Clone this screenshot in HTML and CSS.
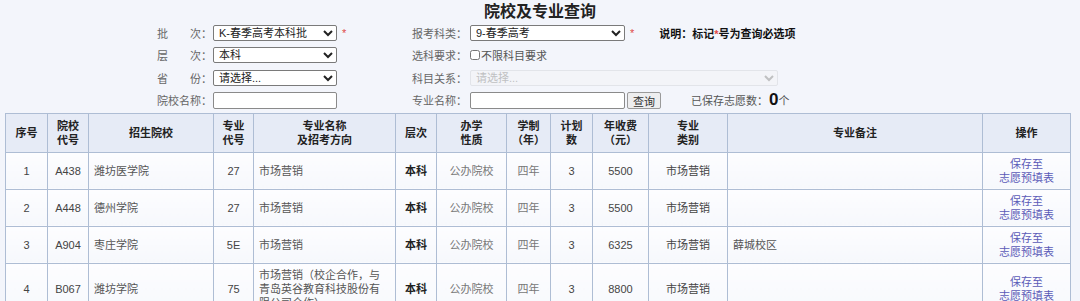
FILE: index.html
```html
<!DOCTYPE html>
<html lang="zh-CN">
<head>
    <meta charset="UTF-8">
    <title>院校及专业查询</title>
    <link rel="stylesheet" href="styles.css">
</head>
<body>
    <h1 class="title">院校及专业查询</h1>

    <form class="query" onsubmit="return false;">
        <label class="lbl">批　　次：</label>
        <div class="fld">
            <select class="sel"><option>K-春季高考本科批</option></select><span class="req">*</span>
        </div>
        <label class="lbl">报考科类：</label>
        <div class="fld">
            <select class="sel sel-mid"><option>9-春季高考</option></select><span class="req">*</span>
            <span class="note">说明：标记<span class="req-in">*</span>号为查询必选项</span>
        </div>

        <label class="lbl">层　　次：</label>
        <div class="fld">
            <select class="sel"><option>本科</option></select>
        </div>
        <label class="lbl">选科要求：</label>
        <div class="fld">
            <label class="chk"><input type="checkbox">不限科目要求</label>
        </div>

        <label class="lbl">省　　份：</label>
        <div class="fld">
            <select class="sel"><option>请选择...</option></select>
        </div>
        <label class="lbl">科目关系：</label>
        <div class="fld">
            <select class="sel sel-wide" disabled><option>请选择...</option></select>
        </div>

        <label class="lbl">院校名称：</label>
        <div class="fld">
            <input type="text" class="txt">
        </div>
        <label class="lbl">专业名称：</label>
        <div class="fld">
            <input type="text" class="txt txt-mid">
            <button class="btn">查询</button>
            <span class="saved">已保存志愿数：<b>0</b>个</span>
        </div>
    </form>

    <table class="list">
        <colgroup>
            <col style="width:42px">
            <col style="width:41px">
            <col style="width:125px">
            <col style="width:40px">
            <col style="width:142px">
            <col style="width:41px">
            <col style="width:70px">
            <col style="width:44px">
            <col style="width:42px">
            <col style="width:56px">
            <col style="width:79px">
            <col style="width:255px">
            <col style="width:88px">
        </colgroup>
        <thead>
            <tr>
                <th>序号</th>
                <th>院校<br>代号</th>
                <th>招生院校</th>
                <th>专业<br>代号</th>
                <th>专业名称<br>及招考方向</th>
                <th>层次</th>
                <th>办学<br>性质</th>
                <th>学制<br>（年）</th>
                <th>计划<br>数</th>
                <th>年收费<br>（元）</th>
                <th>专业<br>类别</th>
                <th>专业备注</th>
                <th>操作</th>
            </tr>
        </thead>
        <tbody>
            <tr>
                <td>1</td>
                <td>A438</td>
                <td class="left">潍坊医学院</td>
                <td>27</td>
                <td class="left">市场营销</td>
                <td class="lv">本科</td>
                <td class="soft">公办院校</td>
                <td class="soft">四年</td>
                <td>3</td>
                <td>5500</td>
                <td>市场营销</td>
                <td class="left"></td>
                <td><a href="#" class="save">保存至<br>志愿预填表</a></td>
            </tr>
            <tr>
                <td>2</td>
                <td>A448</td>
                <td class="left">德州学院</td>
                <td>27</td>
                <td class="left">市场营销</td>
                <td class="lv">本科</td>
                <td class="soft">公办院校</td>
                <td class="soft">四年</td>
                <td>3</td>
                <td>5500</td>
                <td>市场营销</td>
                <td class="left"></td>
                <td><a href="#" class="save">保存至<br>志愿预填表</a></td>
            </tr>
            <tr>
                <td>3</td>
                <td>A904</td>
                <td class="left">枣庄学院</td>
                <td>5E</td>
                <td class="left">市场营销</td>
                <td class="lv">本科</td>
                <td class="soft">公办院校</td>
                <td class="soft">四年</td>
                <td>3</td>
                <td>6325</td>
                <td>市场营销</td>
                <td class="left">薛城校区</td>
                <td><a href="#" class="save">保存至<br>志愿预填表</a></td>
            </tr>
            <tr>
                <td>4</td>
                <td>B067</td>
                <td class="left">潍坊学院</td>
                <td>75</td>
                <td class="left">市场营销（校企合作，与青岛英谷教育科技股份有限公司合作）</td>
                <td class="lv">本科</td>
                <td class="soft">公办院校</td>
                <td class="soft">四年</td>
                <td>3</td>
                <td>8800</td>
                <td>市场营销</td>
                <td class="left"></td>
                <td><a href="#" class="save">保存至<br>志愿预填表</a></td>
            </tr>
        </tbody>
    </table>
</body>
</html>
```

FILE: styles.css
```css
body {
    margin: 0;
    background-color: #f3f5fb;
    font-family: "Liberation Sans", "Noto Sans CJK SC", sans-serif;
    font-size: 11px;
    color: #333;
}
.title {
    margin: 0;
    height: 24px;
    line-height: 24px;
    text-align: center;
    font-size: 16px;
    font-weight: bold;
    color: #222;
}

/* query form: two label/field pairs per row */
.query {
    display: grid;
    grid-template-columns: 56px 199px 58px 1fr;
    grid-auto-rows: 17px;
    row-gap: 5.5px;
    padding-left: 157px;
    margin: 0 0 4px 0;
}
.lbl {
    display: flex;
    align-items: center;
    color: #666;
    white-space: nowrap;
}
.fld {
    display: flex;
    align-items: center;
    white-space: nowrap;
}
.sel {
    width: 124px;
    height: 16px;
    font-family: inherit;
    font-size: 11px;
    color: #222;
    background-color: #fff;
    border: 1px solid #7a7a7a;
    border-radius: 2px;
    padding: 0 1px;
}
.sel-mid { width: 155px; }
.sel-wide {
    width: 308px;
}
.sel:disabled {
    color: #aaa;
    background-color: #f3f4f7;
    border-color: #dcdde2;
}
.req {
    color: #e04848;
    margin-left: 5px;
    font-size: 11px;
}
.req-in { color: #e04848; }
.note {
    margin-left: 25px;
    font-weight: bold;
    color: #111;
}
.chk {
    display: flex;
    align-items: center;
    color: #555;
}
.chk input {
    width: 10px;
    height: 10px;
    margin: 0 1px 0 0;
}
.txt {
    width: 124px;
    height: 17px;
    box-sizing: border-box;
    border: 1px solid #8a8a8a;
    border-radius: 2px;
    background: #fff;
    padding: 0 2px;
    font-size: 11px;
}
.txt-mid { width: 155px; }
.btn {
    height: 17px;
    width: 34px;
    margin-left: 2px;
    padding: 0;
    font-family: inherit;
    font-size: 11px;
    color: #333;
    background-color: #eeeeef;
    border: 1px solid #9a9a9a;
    border-radius: 2px;
}
.saved {
    margin-left: 30px;
    color: #555;
}
.saved b {
    font-size: 17px;
    color: #111;
    margin-left: 1px;
}

/* result table */
.list {
    margin-left: 5px;
    width: 1065px;
    table-layout: fixed;
    border-collapse: collapse;
}
.list th, .list td {
    border: 1px solid #aebdd4;
    line-height: 14px;
    text-align: center;
    vertical-align: middle;
}
.list th {
    height: 28px;
    padding: 5px 3px;
    background-color: #e6ebf6;
    font-weight: bold;
    color: #222;
}
.list td {
    height: 28px;
    padding: 4px 4px;
    background: linear-gradient(#fdfdff, #f6f8fc);
    color: #444;
    word-break: break-all;
}
.list td.left {
    text-align: left;
    padding: 4px 9px 4px 5px;
    color: #555;
}
.list td.lv {
    font-weight: bold;
    color: #222;
}
.list td.soft { color: #777; }
.save {
    color: #5b5bb8;
    text-decoration: none;
}
```
